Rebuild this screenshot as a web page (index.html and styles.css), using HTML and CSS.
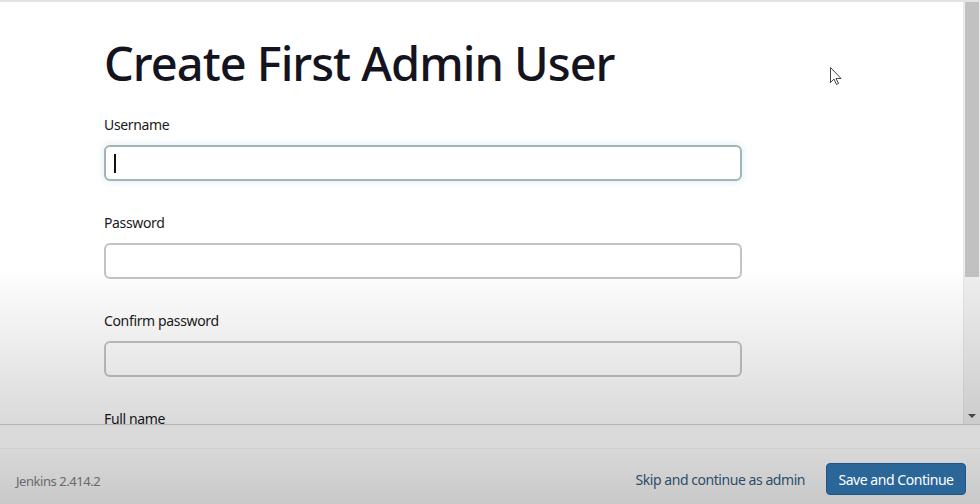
FILE: index.html
```html
<!DOCTYPE html>
<html lang="en">
<head>
  <meta charset="UTF-8">
  <meta name="viewport" content="width=device-width, initial-scale=1.0">
  <title>Create First Admin User</title>
  <link rel="stylesheet" href="styles.css">
</head>
<body>
  <div class="page">
    <div class="main">
      <div class="content">
        <h1>Create First Admin User</h1>

        <div class="field">
          <label for="username">Username</label>
          <div class="input-wrap focused">
            <input type="text" id="username">
            <span class="caret"></span>
          </div>
        </div>

        <div class="field">
          <label for="password1">Password</label>
          <div class="input-wrap">
            <input type="password" id="password1">
          </div>
        </div>

        <div class="field">
          <label for="password2">Confirm password</label>
          <div class="input-wrap">
            <input type="password" id="password2">
          </div>
        </div>

        <div class="field">
          <label for="fullname">Full name</label>
          <div class="input-wrap">
            <input type="text" id="fullname">
          </div>
        </div>
      </div>

      <div class="scrollbar">
        <div class="thumb"></div>
        <div class="track"></div>
        <div class="arrow"></div>
      </div>

      <!-- mouse pointer -->
      <svg class="pointer" width="13" height="19" viewBox="0 0 13 19">
        <path d="M0.5 0.5 L0.5 15.5 L4 12 L6.5 17.5 L8.5 16.5 L6 11.5 L11 11.5 Z" fill="#fff" stroke="#444" stroke-width="1"/>
      </svg>
    </div>

    <div class="bar"></div>

    <div class="footer">
      <span class="version">Jenkins 2.414.2</span>
      <div class="actions">
        <a href="#" class="skip">Skip and continue as admin</a>
        <button class="save">Save and Continue</button>
      </div>
    </div>
  </div>
</body>
</html>
```

FILE: styles.css
```css
* {
  box-sizing: border-box;
}
body {
  margin: 0;
  font-family: 'Noto Sans', 'Open Sans', sans-serif;
  color: #14141f;
  background: #fff;
}
.page {
  width: 980px;
  height: 504px;
  display: flex;
  flex-direction: column;
  overflow: hidden;
}
.main {
  position: relative;
  height: 425px;
  display: flex;
  border-top: 2px solid #e4e4e4;
  border-bottom: 1px solid #b4b4b4;
  background: #fff;
  overflow: hidden;
}
.main::after {
  content: '';
  position: absolute;
  left: 0;
  right: 0;
  top: 0;
  bottom: 0;
  pointer-events: none;
  background: linear-gradient(to bottom, rgba(0, 0, 0, 0) 0, rgba(0, 0, 0, 0) 265px, rgba(0, 0, 0, 0.15) 424px);
}
.content {
  flex: 1;
  padding: 31px 0 0 104px;
}
h1 {
  margin: 0 0 22px;
  font-size: 47px;
  line-height: 60px;
  font-weight: 500;
  letter-spacing: -1px;
}
.field {
  margin-bottom: 32px;
}
label {
  display: block;
  font-size: 14px;
  line-height: 20px;
  margin-bottom: 10px;
  color: #1a1a1a;
  letter-spacing: -0.35px;
}
.input-wrap {
  position: relative;
  width: 638px;
}
input {
  display: block;
  width: 100%;
  height: 36px;
  border: 2px solid #c4c4c4;
  border-radius: 6px;
  background: #fff;
  font-size: 15px;
  padding: 0 10px;
  outline: none;
}
.focused input {
  border-color: #9fb6b3;
  box-shadow: 0 0 6px 2px rgba(170, 200, 230, 0.25);
}
.caret {
  position: absolute;
  left: 10px;
  top: 9px;
  width: 1.5px;
  height: 19px;
  background: #111;
}
.scrollbar {
  width: 17px;
  display: flex;
  flex-direction: column;
  background: #efefef;
  border-left: 1px solid #e6e6e6;
}
.thumb {
  height: 275px;
  background: #c1c1c1;
  margin: 0 1px;
}
.track {
  flex: 1;
}
.arrow {
  height: 17px;
  display: flex;
  justify-content: center;
  align-items: center;
}
.arrow::before {
  content: '';
  border-left: 4px solid transparent;
  border-right: 4px solid transparent;
  border-top: 4px solid #505050;
}
.pointer {
  position: absolute;
  left: 830px;
  top: 65px;
}
.bar {
  height: 24px;
  background: #dadada;
  border-bottom: 1px solid #cfcfcf;
}
.footer {
  flex: 1;
  display: flex;
  justify-content: space-between;
  align-items: center;
  padding: 0 14px 0 16px;
  background: linear-gradient(to bottom, #d8d8d8, #c9c9c9);
}
.version {
  font-size: 13px;
  color: #6a6a6a;
  padding-top: 9px;
  letter-spacing: -0.45px;
}
.actions {
  display: flex;
  align-items: center;
  gap: 21px;
  padding-top: 5px;
}
.skip {
  font-size: 14px;
  color: #2e4d6d;
  text-decoration: none;
  letter-spacing: -0.45px;
}
.save {
  width: 140px;
  height: 32px;
  border: 1px solid #1f5585;
  border-radius: 4px;
  background: #2b6699;
  color: #fff;
  font-family: inherit;
  font-size: 14px;
  letter-spacing: -0.45px;
  cursor: pointer;
}
```
